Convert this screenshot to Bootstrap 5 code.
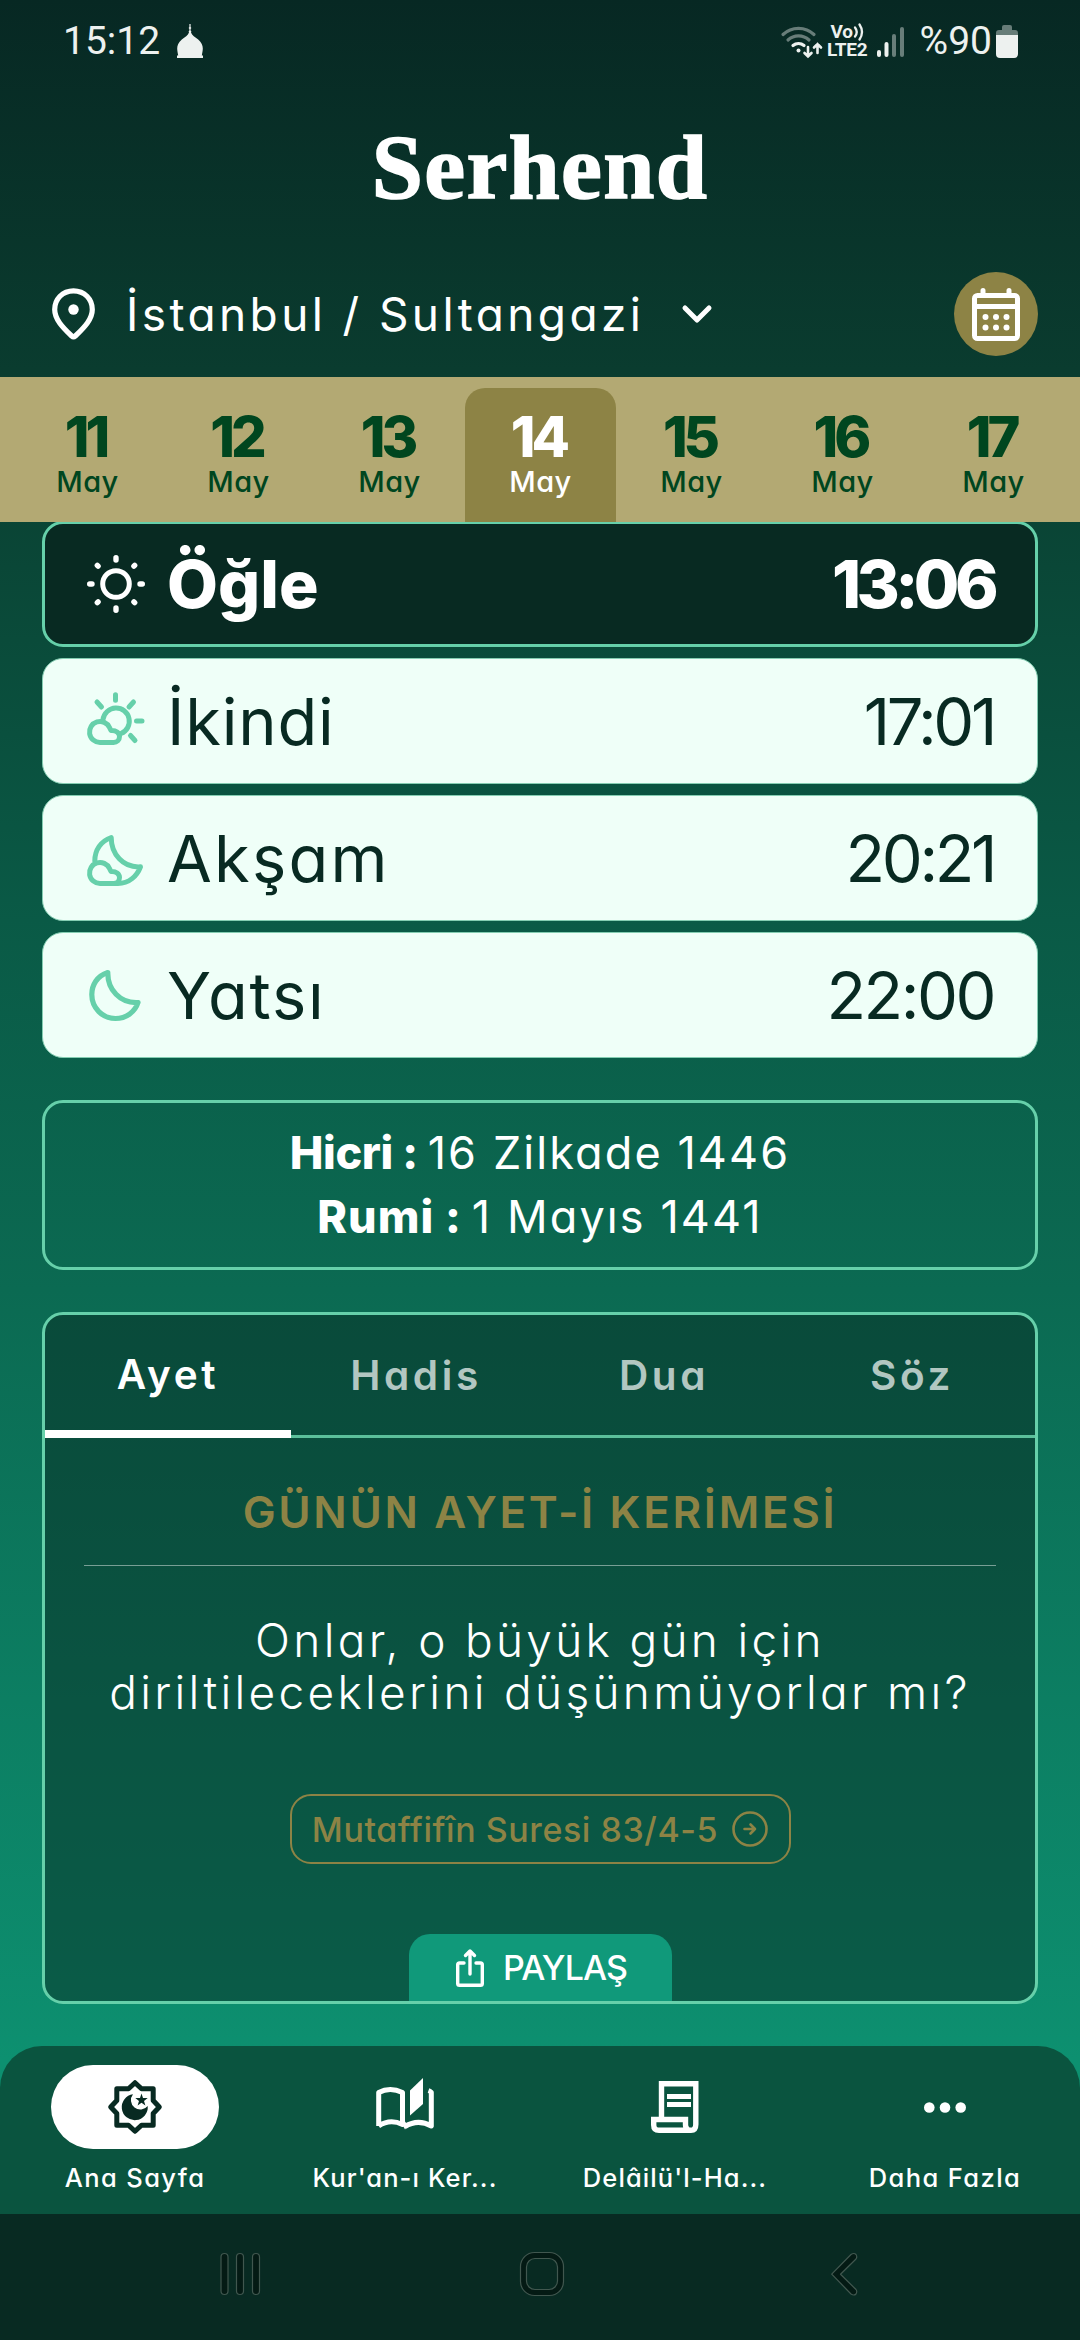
<!DOCTYPE html>
<html lang="tr">
<head>
<meta charset="utf-8">
<meta name="viewport" content="width=device-width, initial-scale=1">
<title>Serhend</title>
<link href="https://cdn.jsdelivr.net/npm/bootstrap@5.3.0/dist/css/bootstrap.min.css" rel="stylesheet">
<style>
  :root { --mint: #66d0aa; --gold: #8d8345; --ink: #082a22; }
  body { font-family: Inter, "Open Sans", sans-serif; font-feature-settings: "cv11"; color: #fff; background: var(--ink); }
  svg { display: block; flex: none; overflow: visible; }
  .app-screen { width: 1080px; height: 2340px; overflow: hidden;
    background: linear-gradient(180deg, #072823 0, #0a3c2f 370px, #0a4b3a 640px, #0a5a46 920px, #0b6a52 1290px, #0c7e62 1700px, #0d9070 2060px); }
  .status-bar { height: 82px; padding: 0 62px 0 63px; font: 400 39px/46px Roboto, sans-serif; color: #edf1ef; font-feature-settings: normal; }
  .status-net { width: 41px; font: 700 19px/18px Roboto, sans-serif; letter-spacing: -.3px; }
  .logo-row { height: 190px; padding-bottom: 21px; }
  .wordmark { font: 700 92px/1 "Liberation Serif", serif; letter-spacing: 1.3px; -webkit-text-stroke: 1.6px #fff; }
  .place-row { height: 84px; margin: 0 42px 21px 52px; }
  .place-name { font-size: 46px; letter-spacing: 3.4px; margin-left: 31px; margin-right: 38px; }
  .cal-btn { width: 84px; height: 84px; background: var(--gold); }
  .date-strip { height: 145px; background: #b3a973; padding: 11px 0 0 12px; color: #00461f; z-index: 2; }
  .day-cell { width: 151px; padding-top: 21px; text-align: center; }
  .day-cell b { display: block; font-weight: 800; font-size: 56px; line-height: 57px; letter-spacing: -4px; margin-left: -4px; }
  .day-cell span { display: block; font-weight: 500; font-size: 29px; line-height: 31px; letter-spacing: .5px; }
  .day-cell.active { background: var(--gold); color: #fff; border-radius: 20px 20px 0 0; }
  .app-main { margin: -1px 42px 0; gap: 11px; }
  .prayer { height: 126px; border: 1px solid #84cdb2; border-radius: 21px; background: #effff8; color: var(--ink); font-size: 65px; line-height: 1; padding: 0 43px 0 44px; }
  .prayer svg { margin-right: 22px; color: var(--mint); }
  .prayer.now { background: var(--ink); color: #fff; border: 3px solid var(--mint); font-weight: 800; font-size: 66px; padding: 0 41px 0 42px; }
  .prayer.now svg { color: #fff; }
  .ls-ogle { letter-spacing: 0; } .ls-ikindi { letter-spacing: .8px; } .ls-aksam { letter-spacing: 2.2px; } .ls-yatsi { letter-spacing: 1.8px; }
  .prayer time { letter-spacing: -3.4px; }
  .prayer.now time { letter-spacing: -4.6px; }
  .prayer time.wide { letter-spacing: -2.5px; }
  .era-box { height: 170px; margin-top: 31px; border: 3px solid var(--mint); border-radius: 21px; font-size: 45px; line-height: 64px; }
  .era-box b { font-weight: 800; letter-spacing: -.4px; margin-right: 10px; }
  .era-box .rumi { letter-spacing: 1px; }
  .era-box span { letter-spacing: 2.1px; }
  .verse-card { height: 692px; margin-top: 31px; border: 3px solid var(--mint); border-radius: 21px; background: rgba(8,42,34,.5); overflow: hidden; }
  .verse-tabs { height: 123px; border-bottom: 3px solid #5cbf9b; gap: 2px; }
  .verse-tabs .nav-link { width: 246px; height: 123px; padding: 0 0 1px; border-radius: 0; font-size: 40.5px; font-weight: 600; letter-spacing: 3.6px; color: rgba(255,255,255,.7); display: flex; align-items: center; justify-content: center; }
  .verse-tabs .nav-link.active { color: #fff; border-bottom: 8px solid #fff; padding-top: 7px; }
  .verse-title { margin-top: 47px; font-size: 44px; line-height: 54px; font-weight: 600; color: var(--gold); letter-spacing: 2.65px; }
  .verse-line { margin: 26px 39px 0; border-top: 1px solid rgba(255,255,255,.45); }
  .verse-text { margin: 48px 0 0; font-size: 46px; line-height: 52px; font-weight: 300; letter-spacing: 3.3px; }
  .sura-btn { width: 501px; height: 70px; margin-top: 76px; border: 2px solid var(--gold); border-radius: 21px; color: var(--gold); font-size: 34px; font-weight: 500; letter-spacing: .55px; gap: 14px; }
  .share-btn { width: 263px; height: 67px; border-radius: 21px 21px 0 0; background: #10997a; font-size: 34px; font-weight: 500; letter-spacing: -.9px; gap: 19px; padding-left: 3px; }
  .tabbar { height: 168px; margin-top: 42px; padding-top: 19px; background: #0a543f; border-radius: 42px 42px 0 0; font-size: 25.5px; font-weight: 500; }
  .tab-item { width: 270px; }
  .tab-pill { width: 168px; height: 84px; border-radius: 42px; }
  .tab-item.active .tab-pill { background: #fff; color: var(--ink); }
  .tab-label { line-height: 30px; margin-top: 14px; white-space: nowrap; letter-spacing: 1.4px; }
  .tab-label.long { letter-spacing: 1.1px; }
  .sys-nav { height: 126px; background: var(--ink); }
</style>
</head>
<body>
<div class="app-screen d-flex flex-column">

  <header class="status-bar d-flex align-items-center justify-content-between">
    <div class="d-flex align-items-center">
      <span>15:12</span>
      <svg class="ms-3" width="28" height="35" viewBox="0 0 28 35" fill="currentColor"><path d="M13.400 0h1.200v3l.8 1-.8 1v1.500l.8 1-.4 1c1 3 4 4.500 7.200 7 3.400 2.800 4.600 6 4.600 9 0 2-.5 4-1 7h1.200v2.500H1v-2.500h1.200c-.5-3-1-5-1-7 0-3 1.200-6.200 4.600-9 3.200-2.500 6.200-4 7.200-7l-.4-1 .8-1V5l-.8-1 .8-1z"/></svg>
    </div>
    <div class="d-flex align-items-center">
      <svg width="42" height="33" viewBox="0 0 42 33" fill="none" stroke="currentColor" stroke-width="3.200" stroke-linecap="round"><g opacity=".42"><path d="M2 9.500a22.500 22.500 0 0 1 31 0"/><path d="M7 15a15.500 15.500 0 0 1 21 0"/></g><path d="M12 20.500a8.500 8.500 0 0 1 11 0"/><circle cx="17.500" cy="25.500" r="2" fill="currentColor" stroke="none"/><path d="M27 22v9M23.500 28l3.500 3.500 3.500-3.500M36.500 28v-9M33 22.500l3.500-3.500 3.500 3.500" stroke-width="2.600"/></svg>
      <div class="status-net ms-1 text-center"><div class="d-flex justify-content-center"><span>Vo</span><svg width="11" height="18" viewBox="0 0 11 18" fill="none" stroke="currentColor" stroke-width="2.300" stroke-linecap="round"><path d="M2 4.500q3.500 4.500 0 9M6.500 1.500q5 7.500 0 15"/></svg></div><div>LTE2</div></div>
      <svg class="ms-2" width="28" height="31" viewBox="0 0 28 31" fill="currentColor"><rect x="1" y="24" width="4" height="7" rx="2"/><rect x="8.500" y="16" width="4" height="15" rx="2"/><g opacity=".42"><rect x="16" y="8" width="4" height="23" rx="2"/><rect x="24" y="1" width="4" height="30" rx="2"/></g></svg>
      <span class="ms-3">%90</span>
      <svg class="ms-1" width="22" height="33" viewBox="0 0 22 33" fill="currentColor"><path opacity=".42" d="M0 10V8q0-3 3-3h3V2q0-2 2-2h6q2 0 2 2v3h3q3 0 3 3v2z"/><path d="M0 10h22v19q0 4-4 4H4q-4 0-4-4z"/></svg>
    </div>
  </header>

  <div class="logo-row d-flex align-items-center justify-content-center"><div class="wordmark">Serhend</div></div>

  <div class="place-row d-flex align-items-center">
    <svg width="43" height="52" viewBox="0 0 43 52" fill="none" stroke="#fff" stroke-width="5.200" stroke-linejoin="round"><path d="M21.500 2.800C10.500 2.800 2.700 11 2.700 21.500c0 9.500 7.500 17.500 17 26.500q1.800 1.600 3.600 0c9.500-9 17-17 17-26.500C40.300 11 32.500 2.800 21.500 2.800z"/><circle cx="21.500" cy="21.500" r="5.200" fill="#fff" stroke="none"/></svg>
    <span class="place-name">İstanbul / Sultangazi</span>
    <svg width="30" height="18" viewBox="0 0 30 18" fill="none" stroke="#fff" stroke-width="5" stroke-linecap="round" stroke-linejoin="round"><path d="M3 3l12 12L27 3"/></svg>
    <button type="button" class="btn cal-btn rounded-circle border-0 p-0 ms-auto d-flex align-items-center justify-content-center" aria-label="Takvim">
      <svg width="48" height="53" viewBox="0 0 48 53" fill="none" stroke="#fff" stroke-width="5" stroke-linecap="round"><rect x="2.500" y="7.500" width="43" height="43" rx="3"/><path d="M11 2.500v4M37 2.500v4M3 18.500h42"/><g fill="#fff" stroke="none"><circle cx="13.500" cy="29" r="3"/><circle cx="24" cy="29" r="3"/><circle cx="34.500" cy="29" r="3"/><circle cx="13.500" cy="39.500" r="3"/><circle cx="24" cy="39.500" r="3"/><circle cx="34.500" cy="39.500" r="3"/></g></svg>
    </button>
  </div>

  <nav class="date-strip d-flex position-relative">
    <div class="day-cell"><b>11</b><span>May</span></div>
    <div class="day-cell"><b>12</b><span>May</span></div>
    <div class="day-cell"><b>13</b><span>May</span></div>
    <div class="day-cell active"><b>14</b><span>May</span></div>
    <div class="day-cell"><b>15</b><span>May</span></div>
    <div class="day-cell"><b>16</b><span>May</span></div>
    <div class="day-cell"><b>17</b><span>May</span></div>
  </nav>

  <main class="app-main d-flex flex-column">
    <div class="prayer now d-flex align-items-center">
      <svg width="58" height="58" viewBox="0 0 58 58" fill="none" stroke="currentColor" stroke-linecap="round"><circle cx="29" cy="29" r="13.300" stroke-width="5"/><path stroke-width="5.400" d="M29 2.700v2.300M29 53v2.300M2.700 29H5M53 29h2.300M10.300 10.300l.8.800M46.900 46.900l.8.800M47.700 10.300l-.8.800M11.100 46.900l-.8.800"/></svg>
      <span class="ls-ogle">Öğle</span><time class="ms-auto">13:06</time>
    </div>
    <div class="prayer d-flex align-items-center">
      <svg width="58" height="58" viewBox="0 0 58 58" fill="none" stroke="currentColor" stroke-width="5" stroke-linecap="round" stroke-linejoin="round"><path d="M28.500 2.700v5.500M10 10l4.500 5M46.500 10L42 15M49.500 29h5.500M43.500 43.500l4.500 5"/><path d="M16 27.500A13.200 13.200 0 1 1 34 41.500"/><path d="M13 50.500a10.500 10.500 0 1 1 9.500-15l1.500 3c5-.5 8.500 2.500 8.500 6 0 3.500-2.500 6-6 6z"/></svg>
      <span class="ls-ikindi">İkindi</span><time class="ms-auto">17:01</time>
    </div>
    <div class="prayer d-flex align-items-center">
      <svg width="58" height="58" viewBox="0 0 58 58" fill="none" stroke="currentColor" stroke-width="5" stroke-linecap="round" stroke-linejoin="round"><path d="M7.800 32C7.800 21 14 12 24.200 8.500C24.200 25 36 39 53.500 37.800C50 47 42 54.500 31 54.500H27"/><path d="M13 54.500a10.500 10.500 0 1 1 9.500-15l1.500 3c5-.5 8.500 2.500 8.500 6 0 3.500-2.500 6-6 6z"/></svg>
      <span class="ls-aksam">Akşam</span><time class="ms-auto">20:21</time>
    </div>
    <div class="prayer d-flex align-items-center">
      <svg width="58" height="58" viewBox="0 0 58 58" fill="none" stroke="currentColor" stroke-width="5.200" stroke-linecap="round" stroke-linejoin="round"><path d="M20.800 6.500C10 10 4.800 19 4.800 28.500C4.800 42 15.500 52.500 28.500 52.500C39 52.500 48 46 51 36.500C33 37.500 20.500 23.500 20.800 6.500z"/></svg>
      <span class="ls-yatsi">Yatsı</span><time class="ms-auto wide">22:00</time>
    </div>

    <section class="era-box d-flex flex-column align-items-center justify-content-center">
      <div><b>Hicri :</b><span>16 Zilkade 1446</span></div>
      <div><b class="rumi">Rumi :</b><span>1 Mayıs 1441</span></div>
    </section>

    <section class="verse-card d-flex flex-column align-items-center text-center mb-0">
      <div class="nav verse-tabs flex-nowrap w-100">
        <a class="nav-link active">Ayet</a><a class="nav-link">Hadis</a><a class="nav-link">Dua</a><a class="nav-link">Söz</a>
      </div>
      <div class="verse-title">GÜNÜN AYET-İ KERİMESİ</div>
      <div class="verse-line align-self-stretch"></div>
      <p class="verse-text">Onlar, o büyük gün için<br>diriltileceklerini düşünmüyorlar mı?</p>
      <div class="sura-btn d-flex align-items-center justify-content-center"><span>Mutaffifîn Suresi 83/4-5</span>
        <svg width="36" height="36" viewBox="0 0 36 36" fill="none" stroke="currentColor" stroke-width="2.600" stroke-linecap="round" stroke-linejoin="round"><circle cx="18" cy="18" r="16.500"/><path d="M12.500 18h10.500M18.500 13.500L23 18l-4.500 4.500"/></svg>
      </div>
      <div class="share-btn d-flex align-items-center justify-content-center mt-auto">
        <svg width="28" height="38" viewBox="0 0 28 38" fill="none" stroke="#fff" stroke-width="3.400" stroke-linecap="round" stroke-linejoin="round"><path d="M8 14H3.500q-1.800 0-1.800 1.800V34.500q0 1.800 1.800 1.800h21q1.800 0 1.800-1.800V15.800q0-1.800-1.800-1.800H20M14 25V3M9.500 6.500L14 2l4.500 4.500"/></svg>
        <span>PAYLAŞ</span>
      </div>
    </section>
  </main>

  <nav class="tabbar d-flex flex-shrink-0">
    <div class="tab-item active d-flex flex-column align-items-center">
      <div class="tab-pill d-flex align-items-center justify-content-center">
        <svg width="54" height="54" viewBox="-27 -27 54 54"><path d="M0-24.300L6.500-18.200H18.200V-6.500L24.300 0 18.200 6.500V18.200H6.500L0 24.300-6.500 18.200H-18.200V6.500L-24.300 0-18.200-6.500V-18.200H-6.500z" fill="none" stroke="currentColor" stroke-width="5" stroke-linejoin="round"/><path d="M-2-12.700A13 13 0 1 0 12.700-1 9.300 9.300 0 1 1-2-12.700z" fill="currentColor"/><path d="M6.500-13.500L8-9h4.700L9-6l1.400 4.500L6.500-4.200 2.600-1.500 4-6 .3-9H5z" fill="currentColor"/></svg>
      </div>
      <div class="tab-label">Ana Sayfa</div>
    </div>
    <div class="tab-item d-flex flex-column align-items-center">
      <div class="tab-pill d-flex align-items-center justify-content-center">
        <svg width="58" height="58" viewBox="0 0 58 58"><path d="M2.700 48V14.500Q14 8.500 26.500 14.500V46.500Q14 40.500 2.700 48M29 48.500Q42 40.500 55.300 48V14.500Q54 13 52.500 12.500" fill="none" stroke="#fff" stroke-width="5" stroke-linejoin="round"/><path d="M26 46l3 5.500 3-4-3-4z" fill="#fff"/><path d="M34 12.500L47 0V26L34 37.500z" fill="#fff"/></svg>
      </div>
      <div class="tab-label long">Kur'an-ı Ker...</div>
    </div>
    <div class="tab-item d-flex flex-column align-items-center">
      <div class="tab-pill d-flex align-items-center justify-content-center">
        <svg width="48" height="52" viewBox="0 0 48 52" fill="none" stroke="#fff" stroke-width="5.400"><path d="M10.500 38V2.700H44.800V43.500Q44.800 49.300 40 49.300H8Q2.700 49.300 2.700 44V38.500H34.500V44Q34.500 47 37 48.500"/><path d="M16 15.500h24M16 23.500h24" stroke-width="5"/></svg>
      </div>
      <div class="tab-label long">Delâilü'l-Ha...</div>
    </div>
    <div class="tab-item d-flex flex-column align-items-center">
      <div class="tab-pill d-flex align-items-center justify-content-center">
        <svg width="42" height="11" viewBox="0 0 42 11" fill="#fff"><circle cx="5.300" cy="5.500" r="5.300"/><circle cx="21" cy="5.500" r="5.300"/><circle cx="36.700" cy="5.500" r="5.300"/></svg>
      </div>
      <div class="tab-label">Daha Fazla</div>
    </div>
  </nav>

  <div class="sys-nav d-flex flex-shrink-0 align-items-center">
    <svg width="1080" height="126" viewBox="0 0 1080 126" fill="#041a14" stroke="#41574f" stroke-width="1.200" stroke-linejoin="round"><rect x="221" y="39.500" width="7" height="41" rx="3.500"/><rect x="236.500" y="39.500" width="7" height="41" rx="3.500"/><rect x="252.500" y="39.500" width="7" height="41" rx="3.500"/><rect x="520.500" y="38.500" width="43" height="43" rx="14"/><rect x="526.500" y="44.500" width="31" height="31" rx="8.500" fill="#082a22"/><path d="M851 40.500q3-2 5 0 1.500 2.500 0 4.500L840.500 60.200 856 75.500q1.500 2 0 4.500-2 2-5 0L831.700 60.200z"/></svg>
  </div>
</div>
<script src="https://cdn.jsdelivr.net/npm/bootstrap@5.3.0/dist/js/bootstrap.bundle.min.js"></script>
</body>
</html>
